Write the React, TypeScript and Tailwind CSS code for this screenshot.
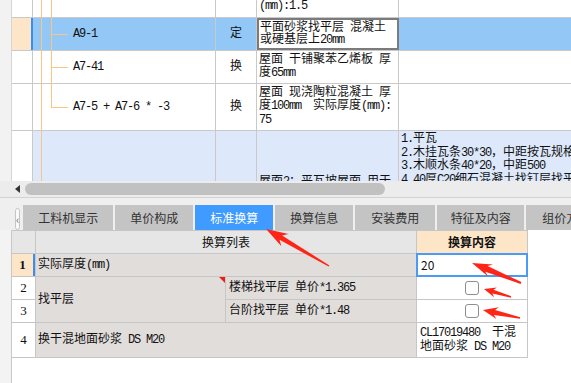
import type { ReactNode } from "react";

const GRID_FONT = "font-['Liberation_Mono','Noto_Sans_CJK_SC',monospace]";

// latin runs are squeezed to the 6px advance of the original bitmap font
function Txt({ s }: { s: string }) {
  return (
    <>
      {s.split(/([ -~]+)/).map((part, i) =>
        i % 2 ? (
          <span key={i} className="tracking-[-1.2px]">
            {part}
          </span>
        ) : (
          part
        ),
      )}
    </>
  );
}

type TreeKind = "pass" | "node" | "lastNode" | "trunk";

function Tree({ kind }: { kind: TreeKind }) {
  return (
    <>
      <div className="absolute bottom-0 left-[8px] top-0 w-px bg-[#f8c682]" />
      {kind === "lastNode" && <div className="absolute left-[18px] top-0 h-1/2 w-px bg-[#f8c682]" />}
      {(kind === "pass" || kind === "node") && <div className="absolute bottom-0 left-[18px] top-0 w-px bg-[#f8c682]" />}
      {(kind === "node" || kind === "lastNode") && (
        <div className="absolute left-[18px] top-1/2 h-px w-[17px] bg-[#f8c682]" />
      )}
    </>
  );
}

function Lines({ lines }: { lines: string[] }) {
  return (
    <div className="whitespace-pre leading-[13.5px]">
      {lines.map((l) => (
        <div key={l}>
          <Txt s={l} />
        </div>
      ))}
    </div>
  );
}

function arrowPoints(tx: number, ty: number, sx: number, sy: number, headLen: number, headW: number, neckW: number, tailW: number) {
  const len = Math.hypot(sx - tx, sy - ty);
  const dx = (sx - tx) / len;
  const dy = (sy - ty) / len;
  const nx = -dy;
  const ny = dx;
  const hx = tx + dx * headLen;
  const hy = ty + dy * headLen;
  const kx = tx + dx * headLen * 0.78;
  const ky = ty + dy * headLen * 0.78;
  const p = (a: number, b: number) => `${a.toFixed(1)},${b.toFixed(1)}`;
  return [
    p(tx, ty),
    p(hx + (nx * headW) / 2, hy + (ny * headW) / 2),
    p(kx + (nx * neckW) / 2, ky + (ny * neckW) / 2),
    p(sx + (nx * tailW) / 2, sy + (ny * tailW) / 2),
    p(sx - (nx * tailW) / 2, sy - (ny * tailW) / 2),
    p(kx - (nx * neckW) / 2, ky - (ny * neckW) / 2),
    p(hx - (nx * headW) / 2, hy - (ny * headW) / 2),
  ].join(" ");
}

const tabs = ["工料机显示", "单价构成", "标准换算", "换算信息", "安装费用", "特征及内容", "组价方案"];
const tabWidths = ["w-[90px]", "w-[78px]", "w-[78px]", "w-[78px]", "w-[80px]", "w-[87px]", "w-[80px]"];

function Cell({ className, children }: { className: string; children?: ReactNode }) {
  return <div className={`flex items-center ${className}`}>{children}</div>;
}

function Checkbox() {
  return <div className="h-[14px] w-[14px] rounded-[3px] border border-[#8e8e8e] bg-white" />;
}

export default function App() {
  return (
    <div className={`relative flex h-[383px] w-[571px] flex-col overflow-hidden bg-white text-[12px] text-[#111] ${GRID_FONT}`}>
      {/* upper grid */}
      <div className="flex h-[181px] shrink-0 overflow-hidden">
        <div className="w-[12px] shrink-0 border-r border-[#d6d6d6] bg-[#f2f2f2]" />
        <div className="flex flex-1 flex-col">
          <div className="flex h-[18px] shrink-0 border-b border-[#c9c9c9]">
            <div className="w-[21px] shrink-0 border-r border-[#c9c9c9]" />
            <div className="relative w-[183px] shrink-0 border-r border-[#c9c9c9]">
              <Tree kind="pass" />
            </div>
            <div className="w-[41px] shrink-0 border-r border-[#c9c9c9]" />
            <div className="w-[142px] shrink-0 border-r border-[#c9c9c9] pl-[2px] leading-[13px]">
              <Txt s="(mm):1.5" />
            </div>
            <div className="flex-1" />
          </div>

          <div className="flex h-[33px] shrink-0 border-b border-[#c9c9c9] bg-[#93c8f6]">
            <div className="w-[21px] shrink-0 border-r-2 border-[#3a8fee] bg-[#fde6c8]" />
            <div className="relative flex w-[183px] shrink-0 items-center border-r border-[#c9c9c9] pl-[40px]">
              <Tree kind="node" />
              <Txt s="A9-1" />
            </div>
            <div className="flex w-[41px] shrink-0 items-center justify-center border-r border-[#c9c9c9]">定</div>
            <div className="flex w-[142px] shrink-0 items-center border-2 border-[#7b7b7b] bg-white pl-[1px]">
              <div className="whitespace-pre leading-[12.5px]">
                <div><Txt s="平面砂浆找平层 混凝土" /></div>
                <div><Txt s="或硬基层上20mm" /></div>
              </div>
            </div>
            <div className="flex-1" />
          </div>

          <div className="flex h-[33px] shrink-0 border-b border-[#c9c9c9]">
            <div className="w-[21px] shrink-0 border-r border-[#c9c9c9]" />
            <div className="relative flex w-[183px] shrink-0 items-center border-r border-[#c9c9c9] pl-[40px]">
              <Tree kind="node" />
              <Txt s="A7-41" />
            </div>
            <div className="flex w-[41px] shrink-0 items-center justify-center border-r border-[#c9c9c9]">换</div>
            <div className="flex w-[142px] shrink-0 items-center overflow-hidden border-r border-[#c9c9c9] pl-[2px]">
              <Lines lines={["屋面 干铺聚苯乙烯板 厚", "度65mm"]} />
            </div>
            <div className="flex-1" />
          </div>

          <div className="flex h-[47px] shrink-0 border-b border-[#c9c9c9]">
            <div className="w-[21px] shrink-0 border-r border-[#c9c9c9]" />
            <div className="relative flex w-[183px] shrink-0 items-center border-r border-[#c9c9c9] pl-[40px]">
              <Tree kind="lastNode" />
              <span className="whitespace-pre">
                <Txt s="A7-5 + A7-6 * -3" />
              </span>
            </div>
            <div className="flex w-[41px] shrink-0 items-center justify-center border-r border-[#c9c9c9]">换</div>
            <div className="flex w-[142px] shrink-0 items-center overflow-hidden border-r border-[#c9c9c9] pl-[2px]">
              <Lines lines={["屋面 现浇陶粒混凝土 厚", "度100mm  实际厚度(mm):", "75"]} />
            </div>
            <div className="flex-1" />
          </div>

          <div className="flex h-[90px] shrink-0">
            <div className="w-[21px] shrink-0 border-r border-[#c9c9c9]" />
            <div className="relative w-[183px] shrink-0 border-r border-[#c9c9c9] bg-[#dde8fb]">
              <Tree kind="trunk" />
            </div>
            <div className="w-[41px] shrink-0 border-r border-[#c9c9c9] bg-[#dde8fb]" />
            <div className="w-[142px] shrink-0 overflow-hidden whitespace-nowrap border-r border-[#c9c9c9] bg-[#dde8fb] pl-[2px] pt-[42px]">
              <Txt s="屋面2：平瓦坡屋面-用于" />
            </div>
            <div className="flex-1 overflow-hidden whitespace-nowrap bg-[#dde8fb] pl-[2px] pt-[2px]">
              <Lines
                lines={["1.平瓦", "2.木挂瓦条30*30，中距按瓦规格", "3.木顺水条40*20，中距500", "4.40厚C20细石混凝土找钉层找平"]}
              />
            </div>
          </div>
        </div>
      </div>

      {/* horizontal scrollbar */}
      <div className="flex h-[16px] shrink-0 items-center bg-[#ececec]">
        <svg className="ml-[15px]" width="5" height="8" viewBox="0 0 5 8">
          <polygon points="5,0 5,8 0,4" fill="#333" />
        </svg>
        <div className="ml-[5px] h-[12px] w-[360px] rounded-full bg-[#c1c1c1]" />
      </div>

      {/* tabs */}
      <div className="flex h-[33px] shrink-0 items-end border-t border-[#d2d2d2] bg-[#efefef] font-['Noto_Sans_CJK_SC',sans-serif]">
        <div className="ml-[15px] flex h-[22px] w-[13px] items-center justify-center rounded-[3px] border border-[#c4c4c4] bg-[#fafafa] text-[11px] leading-none text-[#666]">
          ‹
        </div>
        <div className="ml-[3px] flex gap-[2px]">
          {tabs.map((t, i) => (
            <div
              key={t}
              className={`flex h-[25px] shrink-0 items-center justify-center ${tabWidths[i]} ${
                i === 2 ? "bg-[#3f9bff] text-white" : "bg-[#c4c4c4] text-[#333]"
              }`}
            >
              {t}
            </div>
          ))}
        </div>
      </div>

      {/* conversion table */}
      <div className="flex flex-1">
        <div className="w-[12px] shrink-0 border-r border-[#c8c8c8] bg-[#f3f3f3]" />
        <div className="flex-1 bg-white">
          <div className="grid w-fit grid-cols-[23px_189px_190px_110px] grid-rows-[22px_22px_22px_22px_34px] gap-px bg-[#c6c6c6] pb-px pr-px pt-px">
            <div className="bg-[#e6e6e6]" />
            <Cell className="col-span-2 justify-center bg-[#e6e6e6] font-['Noto_Sans_CJK_SC',sans-serif]">换算列表</Cell>
            <Cell className="justify-center bg-[#fde6c8] font-['Noto_Sans_CJK_SC',sans-serif] font-bold">换算内容</Cell>

            <Cell className="justify-center border-r-2 border-[#3a8fee] bg-[#fde6c8] font-['Liberation_Serif',serif] text-[13px] font-bold">1</Cell>
            <Cell className="col-span-2 bg-[#e1dddb] pl-[2px]">
              <Txt s="实际厚度(mm)" />
            </Cell>
            <Cell className="-m-px border-2 border-[#4a9bf5] bg-white pl-[3px] font-['Noto_Sans_CJK_SC',sans-serif]">20</Cell>

            <Cell className="justify-center bg-white font-['Liberation_Serif',serif] text-[13px]">2</Cell>
            <Cell className="relative row-span-2 bg-[#e1dddb] pl-[2px]">
              找平层
              <div className="absolute right-0 top-0 h-0 w-0 border-l-[6px] border-t-[6px] border-l-transparent border-t-[#f01c1c]" />
            </Cell>
            <Cell className="whitespace-pre bg-[#e1dddb] pl-[3px]">
              <Txt s="楼梯找平层 单价*1.365" />
            </Cell>
            <Cell className="justify-center bg-white">
              <Checkbox />
            </Cell>

            <Cell className="justify-center bg-white font-['Liberation_Serif',serif] text-[13px]">3</Cell>
            <Cell className="whitespace-pre bg-[#e1dddb] pl-[3px]">
              <Txt s="台阶找平层 单价*1.48" />
            </Cell>
            <Cell className="justify-center bg-white">
              <Checkbox />
            </Cell>

            <Cell className="justify-center bg-white font-['Liberation_Serif',serif] text-[13px]">4</Cell>
            <Cell className="col-span-2 whitespace-pre bg-[#e1dddb] pl-[2px]">
              <Txt s="换干混地面砂浆 DS M20" />
            </Cell>
            <Cell className="bg-white pl-[3px]">
              <div className="whitespace-pre leading-[14px]">
                <div><Txt s="CL17019480  干混" /></div>
                <div><Txt s="地面砂浆 DS M20" /></div>
              </div>
            </Cell>
          </div>
        </div>
      </div>

      {/* red annotation arrows */}
      <svg className="pointer-events-none absolute left-0 top-0" width="571" height="383" viewBox="0 0 571 383">
        <g fill="#ff2516">
          <polygon points={arrowPoints(266, 229, 329, 266, 22, 14, 5, 1.5)} />
          <polygon points={arrowPoints(472, 263, 521, 283, 20, 13, 6, 2)} />
          <polygon points={arrowPoints(484, 289, 511, 297, 12, 10, 4, 1.5)} />
          <polygon points={arrowPoints(483, 310, 520, 318, 15, 12, 5, 1.5)} />
        </g>
      </svg>
    </div>
  );
}
